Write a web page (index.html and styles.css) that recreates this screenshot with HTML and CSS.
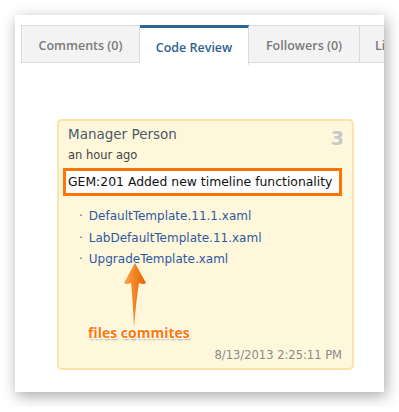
FILE: index.html
```html
<!DOCTYPE html>
<html lang="en">
  <head>
    <meta charset="UTF-8" />
    <title>Code Review</title>
    <link rel="stylesheet" href="styles.css">
  </head>
  <body>
    <div class="panel">
      <ul class="tabs">
        <li class="tab">Comments (0)</li>
        <li class="tab active">Code Review</li>
        <li class="tab">Followers (0)</li>
        <li class="tab">Links (0)</li>
      </ul>

      <div class="card">
        <div class="card-head">
          <div>
            <div class="author">Manager Person</div>
            <div class="when">an hour ago</div>
          </div>
          <div class="count">3</div>
        </div>

        <div class="message">GEM:201 Added new timeline functionality</div>

        <ul class="files">
          <li><a href="#">DefaultTemplate.11.1.xaml</a></li>
          <li><a href="#">LabDefaultTemplate.11.xaml</a></li>
          <li><a href="#">UpgradeTemplate.xaml</a></li>
        </ul>

        <div class="date">8/13/2013 2:25:11 PM</div>

        <!-- annotation -->
        <svg class="arrow" width="30" height="70" viewBox="0 0 30 70">
          <defs>
            <linearGradient id="og" x1="0" y1="0" x2="1" y2="0">
              <stop offset="0" stop-color="#ffa54a" />
              <stop offset="1" stop-color="#e46200" />
            </linearGradient>
          </defs>
          <path d="M15 1 L26 21 Q23 23 19 21 Q16 40 14 66 Q13 40 11 21 Q7 23 4 21 Z" fill="url(#og)" />
        </svg>
        <div class="note">files commites</div>
      </div>
    </div>
  </body>
</html>
```

FILE: styles.css
```css
body {
  margin: 0;
  padding: 15px;
  background-color: #fff;
  font-family: "DejaVu Sans", Verdana, sans-serif;
}

.panel {
  width: 369px;
  height: 377px;
  background-color: #fff;
  box-shadow: 2px 4px 14px rgba(0, 0, 0, 0.35);
  overflow: hidden;
}

.tabs {
  display: flex;
  margin: 0;
  padding: 10px 0 0 6px;
  list-style: none;
  white-space: nowrap;
}

.tab {
  flex: none;
  box-sizing: border-box;
  height: 38px;
  padding: 0 15px;
  line-height: 39px;
  border: 1px solid #dcdcdc;
  border-left: none;
  background-color: #f3f3f3;
  color: #7a7a7a;
  font-family: "Open Sans", sans-serif;
  font-weight: 600;
  font-size: 12.5px;
}

.tab:first-child {
  border-left: 1px solid #dcdcdc;
  width: 119px;
  text-align: center;
}

.tab.active {
  width: 109px;
  height: 40px;
  border-top: 3px solid #2f6496;
  border-bottom: none;
  background-color: #fff;
  color: #2f5f8f;
  line-height: 40px;
  text-align: center;
}

.tab:nth-child(3) {
  width: 111px;
  text-align: center;
}

.card {
  position: relative;
  box-sizing: border-box;
  width: 297px;
  height: 251px;
  margin: 54px 0 0 42px;
  padding: 4px 8px 0 9px;
  background-color: #fff7dc;
  border: 2px solid #fde2a9;
  border-radius: 5px;
}

.card-head {
  display: flex;
  justify-content: space-between;
}

.author {
  color: #4d5966;
  font-size: 13.5px;
  line-height: 18px;
}

.when {
  margin-top: 5px;
  color: #444;
  font-size: 11.5px;
  line-height: 14px;
}

.count {
  margin: 2px 0 0;
  color: #c8c8c8;
  font-size: 19px;
  font-weight: bold;
}

.message {
  box-sizing: border-box;
  width: 279px;
  height: 28px;
  margin: 6px 0 0 -5px;
  padding: 0 0 0 2px;
  background-color: #fff;
  border: 3px solid #ff7400;
  color: #111;
  font-size: 12.4px;
  line-height: 21px;
}

.files {
  margin: 10px 0 0;
  padding: 0 0 0 11px;
  list-style: none;
}

.files li {
  height: 21.5px;
  font-size: 12px;
  line-height: 21.5px;
  color: #666;
}

.files li::before {
  content: "·";
  margin-right: 6px;
}

.files a {
  color: #2c5aa0;
  text-decoration: none;
}

.date {
  position: absolute;
  right: 10px;
  bottom: 6px;
  color: #8a8a8a;
  font-size: 11.5px;
}

.arrow {
  position: absolute;
  left: 61px;
  top: 141px;
}

.note {
  position: absolute;
  left: 29px;
  top: 202px;
  color: #ff7a00;
  font-family: "Open Sans", sans-serif;
  font-weight: 700;
  font-size: 14px;
  text-shadow: -1px -1px 0 #fff, 1px -1px 0 #fff, -1px 1px 0 #fff, 1px 1px 0 #fff,
    1px 2px 2px rgba(0, 0, 0, 0.35);
}
```
